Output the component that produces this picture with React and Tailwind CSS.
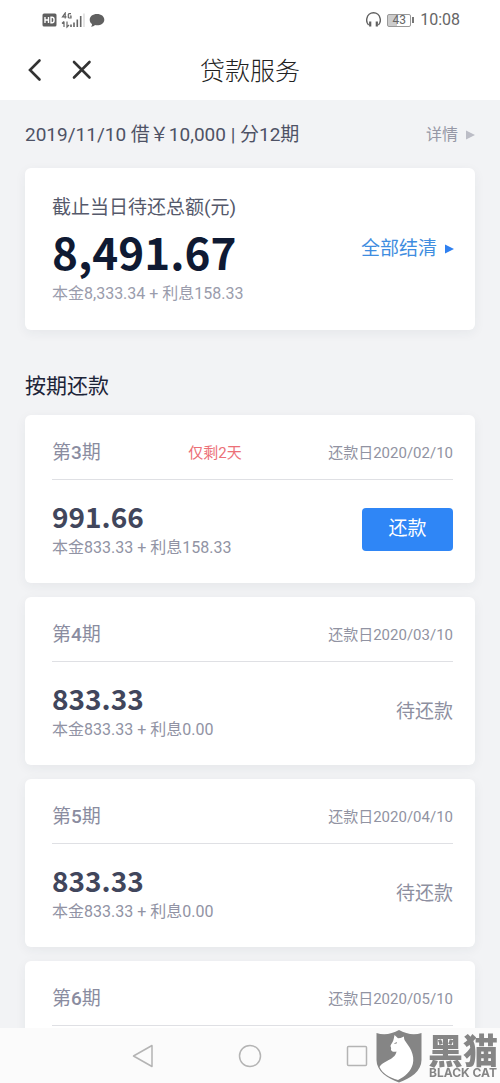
import React from "react";

const LATIN_CJK = "font-['Roboto','Noto_Sans_CJK_SC',sans-serif]";
const FIGURES = "font-['Noto_Sans_CJK_SC',sans-serif]";

const installments = [
  { period: 3, amount: "991.66", principal: "833.33", interest: "158.33", due: "2020/02/10", daysLeft: 2 },
  { period: 4, amount: "833.33", principal: "833.33", interest: "0.00", due: "2020/03/10" },
  { period: 5, amount: "833.33", principal: "833.33", interest: "0.00", due: "2020/04/10" },
  { period: 6, due: "2020/05/10" },
];

function StatusBar() {
  return (
    <div className="flex h-10 shrink-0 items-center justify-between pr-10 pl-[42px] text-[#666]">
      <div className="flex items-center gap-1">
        <svg width="15" height="14" viewBox="0 0 15 14" aria-label="HD">
          <rect x="0.5" y="0.5" width="14" height="13" rx="1.5" fill="#606060" />
          <path d="M3 4v6M6.500 4v6M3 7h3.500M9 4.200v5.600h1a2 2 0 0 0 2-2v-1.600a2 2 0 0 0-2-2z" stroke="#fff" strokeWidth="1.400" fill="none" />
        </svg>
        <svg width="24" height="17" viewBox="0 0 24 17" fill="none" stroke="#666" aria-label="4G">
          <path d="M4.200 6.500V1L1.500 4.800h4M10 1.600H8L7.300 2.500v3L8 6h2V4H8.800" strokeWidth="1.200" />
          <path d="M3 9.500V15M1 11.500L3 9.500M6 9.500V15L8 13" strokeWidth="1.200" />
          <path d="M10 12.500V15M13 10.500V15M16.300 7.500V15M19.700 4V15" strokeWidth="1.600" />
          <path d="M23 1.500V15" strokeWidth="1.500" stroke="#ddd" />
        </svg>
        <svg width="16" height="15" viewBox="0 0 16 15" fill="#606060" aria-label="消息">
          <path d="M8 1c4.200 0 7.300 2.400 7.300 5.700S12.200 12.300 8 12.300c-.7 0-1.400-.1-2-.2-1 1-2.300 1.700-4 1.700.8-.9 1.100-1.800 1-2.800C1.500 10 .7 8.500.7 6.700.7 3.400 3.800 1 8 1z" />
        </svg>
      </div>
      <div className="flex items-center gap-1.5">
        <svg width="15" height="16" viewBox="0 0 15 16" fill="none" stroke="#606060" aria-label="耳机">
          <path d="M2.600 13C.3 10.500.6 7.500.9 6.300a6.700 6.700 0 0 1 13.200 0c.3 1.200.6 4.200-1.700 6.700" strokeWidth="1.400" />
          <path d="M4.200 9.500v5M10.800 9.500v5" strokeWidth="2.200" />
        </svg>
        <div className="flex items-center gap-px">
          <div className="flex h-[13px] w-6 items-center justify-center rounded-xs border border-[#999] bg-linear-to-r from-[#ccc] from-43% to-white to-43% text-xs leading-none">
            43
          </div>
          <div className="h-1.5 w-0.5 bg-[#777]" />
        </div>
        <span className="text-base leading-5">10:08</span>
      </div>
    </div>
  );
}

function NavBar() {
  return (
    <header className="grid h-15 shrink-0 grid-cols-[1fr_auto_1fr] items-center px-6 text-[#333]">
      <div className="flex items-center gap-6">
        <button type="button" aria-label="返回">
          <svg width="22" height="24" viewBox="0 0 22 24" fill="none" stroke="currentColor" strokeWidth="2.600" strokeLinecap="round">
            <path d="M15.500 2.500L6 12l9.500 9.500" />
          </svg>
        </button>
        <button type="button" aria-label="关闭">
          <svg width="24" height="24" viewBox="0 0 24 24" fill="none" stroke="currentColor" strokeWidth="2.600" strokeLinecap="round">
            <path d="M4 4l15.500 15.500M19.500 4L4 19.500" />
          </svg>
        </button>
      </div>
      <h1 className="pt-1 text-[25px] leading-9 font-light text-[#222]">贷款服务</h1>
    </header>
  );
}

function Triangle({ className }) {
  return (
    <svg width="9" height="10" viewBox="0 0 9 10" fill="currentColor" className={className} aria-hidden="true">
      <path d="M0 0.500L9 5L0 9.500z" />
    </svg>
  );
}

function Summary() {
  return (
    <section className="flex items-center justify-between rounded-md bg-white py-6 pr-[21px] pl-[27px] shadow-[0_3px_12px_rgba(40,50,70,0.06)]">
      <div>
        <h2 className="text-[19px] leading-8 text-[#55596b]">截止当日待还总额(元)</h2>
        <p className={`${FIGURES} text-[44px] leading-[54px] font-bold text-[#0f1a33]`}>8,491.67</p>
        <p className="pt-1 text-base leading-6 text-[#9a9cac]">本金8,333.34 + 利息158.33</p>
      </div>
      <a href="#settle" className="flex items-center gap-2 text-[19px] leading-7 text-[#3f8de0]">
        全部结清
        <Triangle className="text-[#2f80f0]" />
      </a>
    </section>
  );
}

function Installment({ item }) {
  return (
    <li className="rounded-md bg-white pr-[22px] pl-[27px] shadow-[0_3px_12px_rgba(40,50,70,0.06)] last:pb-6">
      <div className="grid h-[65px] grid-cols-[1fr_auto_1fr] items-center border-b border-[#dfe0e4] pt-3">
        <h3 className="text-[19px] leading-7 text-[#8a8ca0]">
          第<span className="font-medium">{item.period}</span>期
        </h3>
        <p className="pr-[75px] text-[15px] leading-6 text-[#ec7077]">{item.daysLeft ? `仅剩${item.daysLeft}天` : ""}</p>
        <p className="text-right text-[15px] leading-6 whitespace-nowrap text-[#9193a2]">还款日{item.due}</p>
      </div>
      {item.amount && (
        <div className="flex h-[103px] items-center justify-between pb-1">
          <div>
            <p className={`${FIGURES} pb-1 text-[28px] leading-8 font-bold text-[#41465c]`}>{item.amount}</p>
            <p className="text-base leading-6 text-[#9193a4]">
              本金{item.principal} + 利息{item.interest}
            </p>
          </div>
          {item.daysLeft ? (
            <button type="button" className="h-[43px] w-[91px] rounded-sm bg-[#2f86f6] text-[19px] text-white">
              还款
            </button>
          ) : (
            <p className="text-[19px] leading-7 text-[#8d8fa0]">待还款</p>
          )}
        </div>
      )}
    </li>
  );
}

function SystemNav() {
  return (
    <nav className="grid h-[55px] shrink-0 grid-cols-3 items-center bg-[#fbfbfb] px-[90px] text-[#b4b4b4]">
      <button type="button" aria-label="返回" className="flex justify-center">
        <svg width="22" height="24" viewBox="0 0 22 24" fill="none" stroke="currentColor" strokeWidth="1.500" strokeLinejoin="round">
          <path d="M20 1.500v21L1.500 12z" />
        </svg>
      </button>
      <button type="button" aria-label="主页" className="flex justify-center">
        <svg width="24" height="24" viewBox="0 0 24 24" fill="none" stroke="currentColor" strokeWidth="1.500">
          <circle cx="12" cy="12" r="10.500" />
        </svg>
      </button>
      <button type="button" aria-label="最近任务" className="flex justify-center">
        <svg width="22" height="22" viewBox="0 0 22 22" fill="none" stroke="currentColor" strokeWidth="1.500">
          <rect x="1.500" y="1.500" width="19" height="19" rx="1" />
        </svg>
      </button>
    </nav>
  );
}

function Watermark() {
  return (
    <div className="pointer-events-none absolute right-0 bottom-0 flex items-end text-[#858585]">
      <svg width="46" height="54" viewBox="0 0 46 54" aria-hidden="true">
        <path d="M0.500 4C8 6.500 16 5 23 1c7 4 15 5.500 22.500 3v27c0 11-11 18.500-22.500 22.500C11.500 49.500.5 42 .5 31z" fill="#858585" />
        <path
          d="M18.500 6l3.500 3.200 2.500-.2 3.500-1.500c0 2 .2 3 1.200 4.500 2 3 4.300 5.500 6 9.500 2 4.500 2.700 9 1.600 13.500-1.800 7-7.300 12.300-14.800 16C13 48.500 6.500 44.500 3.500 38c1.500-2.800 4.500-4.500 7.500-6 4.500-2.300 9-5 9.500-9.500-2 .6-4.500.3-5.300-1.200-.5-1 .2-1.700-.2-2.700-.5-1-.8-2 .2-3.300 2.100-2.600 2.600-5.300 3.300-9.300z"
          fill="#fff"
        />
        <path d="M18.500 14.500l2.500-.8" stroke="#858585" strokeWidth="1" />
      </svg>
      <div className="flex w-[78px] flex-col items-center pb-1 pl-1">
        <span className={`${FIGURES} text-[35px] leading-9 font-black`}>黑猫</span>
        <span className="font-['Inter',sans-serif] text-xs leading-3 font-bold whitespace-nowrap">BLACK CAT</span>
      </div>
    </div>
  );
}

export default function App() {
  return (
    <div className={`relative flex h-screen flex-col overflow-hidden bg-white ${LATIN_CJK}`}>
      <StatusBar />
      <NavBar />
      <main className="min-h-0 flex-1 overflow-y-auto bg-[#f2f3f5] px-[25px] [scrollbar-width:none]">
        <div className="flex h-17 items-center justify-between pt-0.5">
          <p className="text-[19px] leading-7 text-[#4e5265]">2019/11/10 借￥10,000 | 分12期</p>
          <a href="#details" className="flex items-center gap-2 text-base leading-6 text-[#9698a6]">
            详情
            <Triangle className="text-[#bcbdc6]" />
          </a>
        </div>
        <Summary />
        <h2 className="pt-[38px] pb-[11px] text-[21px] leading-9 text-[#1d2438]">按期还款</h2>
        <ul className="flex flex-col gap-3.5">
          {installments.map((item) => (
            <Installment key={item.period} item={item} />
          ))}
        </ul>
      </main>
      <SystemNav />
      <Watermark />
    </div>
  );
}
